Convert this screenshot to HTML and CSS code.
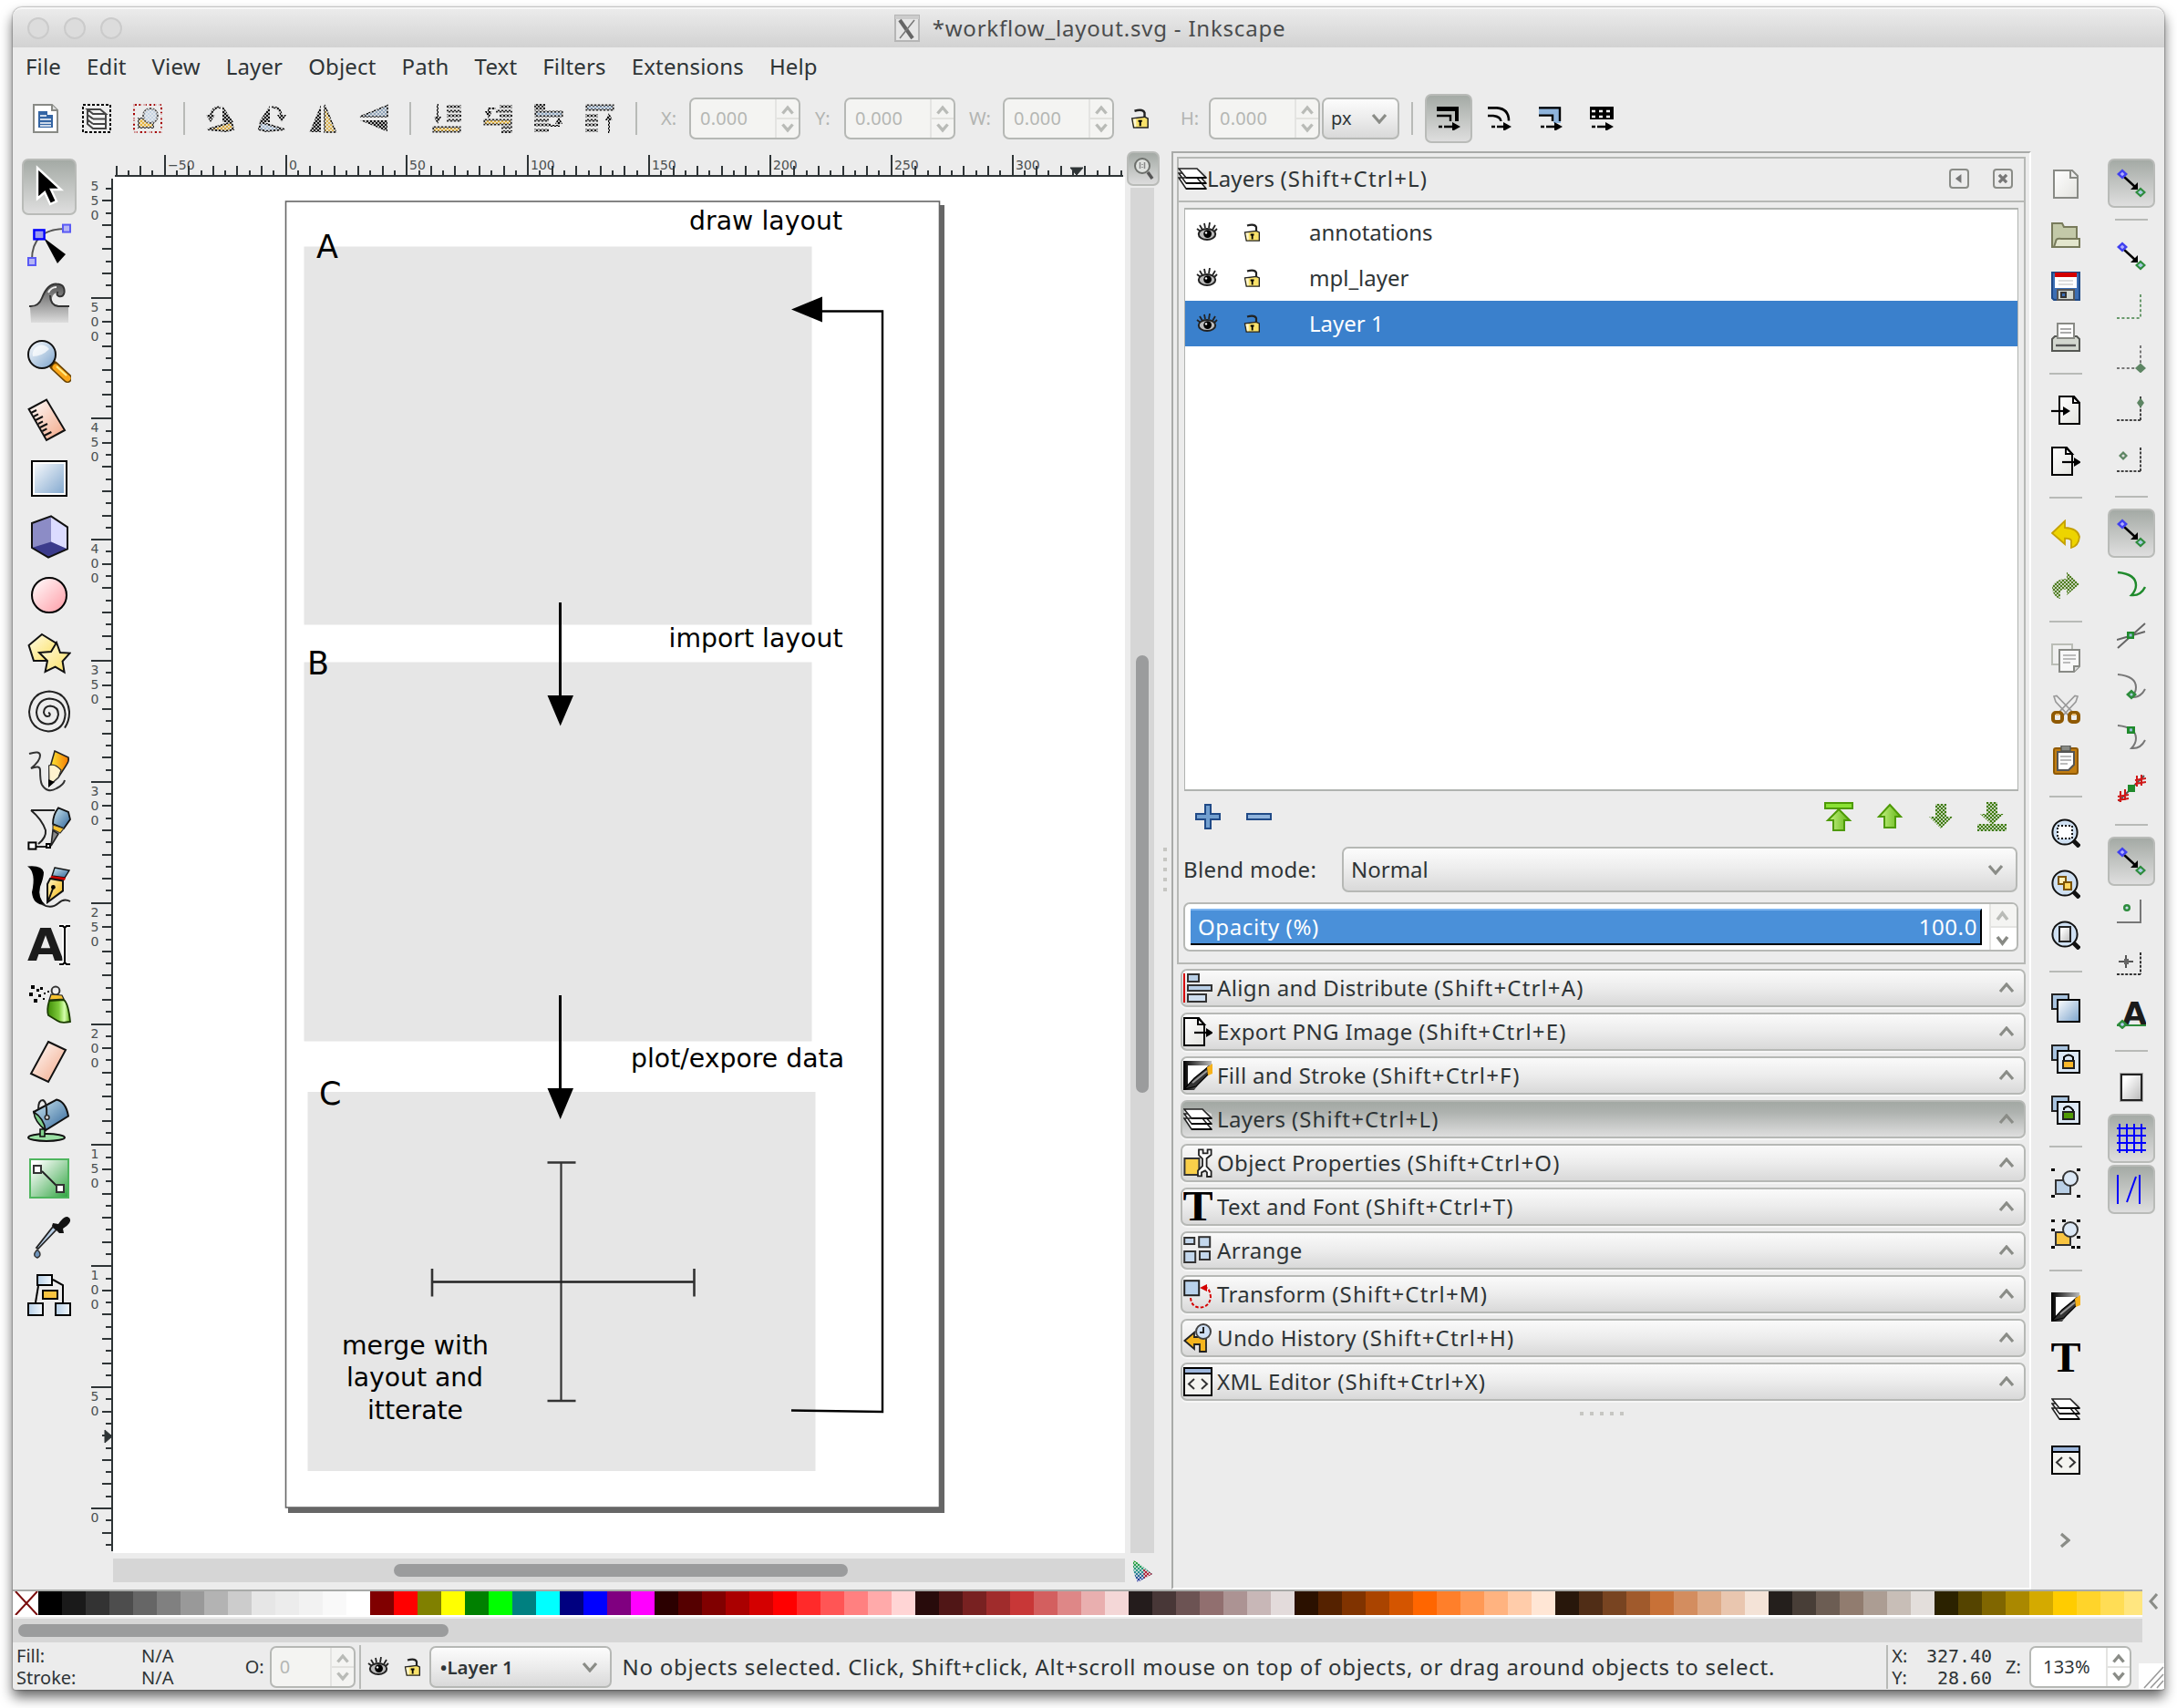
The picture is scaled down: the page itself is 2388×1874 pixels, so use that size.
FILE: index.html
```html
<!DOCTYPE html>
<html lang="en">
<head>
<meta charset="utf-8">
<title>*workflow_layout.svg - Inkscape</title>
<link rel="stylesheet" href="styles.css">
</head>
<body>
<svg class="sprite" aria-hidden="true">
  <defs>
    <linearGradient id="gBlue" x1="0" y1="0" x2="1" y2="1"><stop offset="0" stop-color="#fff"/><stop offset="1" stop-color="#7ba3cc"/></linearGradient>
    <linearGradient id="gBlueH" x1="0" y1="0" x2="1" y2="0"><stop offset="0" stop-color="#b4cfe8"/><stop offset="1" stop-color="#f4f8fc"/></linearGradient>
    <linearGradient id="gPen" x1="0" y1="0" x2="1" y2="1"><stop offset="0" stop-color="#cfe9f2"/><stop offset="1" stop-color="#2f6499"/></linearGradient>
    <linearGradient id="gPink" x1="0" y1="0" x2="1" y2="1"><stop offset="0" stop-color="#fff"/><stop offset="1" stop-color="#ff9ba5"/></linearGradient>
    <linearGradient id="gPeach" x1="0" y1="0" x2="1" y2="1"><stop offset="0" stop-color="#fff"/><stop offset="1" stop-color="#f2a584"/></linearGradient>
    <linearGradient id="gYellow" x1="0" y1="0" x2="1" y2="1"><stop offset="0" stop-color="#fffce8"/><stop offset="1" stop-color="#fbdf5e"/></linearGradient>
    <linearGradient id="gOrange" x1="0" y1="0" x2="1" y2="0"><stop offset="0" stop-color="#fcf03a"/><stop offset="1" stop-color="#f57900"/></linearGradient>
    <linearGradient id="gGold" x1="0" y1="0" x2="1" y2="1"><stop offset="0" stop-color="#fff6c8"/><stop offset="1" stop-color="#f5b400"/></linearGradient>
    <linearGradient id="gGreen" x1="0" y1="0" x2="1" y2="1"><stop offset=".1" stop-color="#fff"/><stop offset="1" stop-color="#2fa340"/></linearGradient>
    <linearGradient id="gSpray" x1="0" y1="0" x2="1" y2="0"><stop offset="0" stop-color="#3f8c06"/><stop offset=".5" stop-color="#7ecb3b"/><stop offset=".75" stop-color="#d7ffb0"/><stop offset="1" stop-color="#5fb019"/></linearGradient>
    <linearGradient id="gWave" x1="0" y1="0" x2="0" y2="1"><stop offset="0" stop-color="#555"/><stop offset="1" stop-color="#ddd"/></linearGradient>
    <linearGradient id="gPage" x1="0" y1="0" x2="1" y2="1"><stop offset="0" stop-color="#fff"/><stop offset="1" stop-color="#e3e3df"/></linearGradient>
    <linearGradient id="gGray" x1="0" y1="0" x2="1" y2="1"><stop offset=".2" stop-color="#fff"/><stop offset="1" stop-color="#b8b8b8"/></linearGradient>
    <linearGradient id="gArrow" x1="0" y1="0" x2="1" y2="0"><stop offset="0" stop-color="#c9f58a"/><stop offset="1" stop-color="#63b515"/></linearGradient>
    <linearGradient id="gDark" x1="0" y1="0" x2="1" y2="0"><stop offset="0" stop-color="#000"/><stop offset="1" stop-color="#bbb"/></linearGradient>
  </defs>

  <!-- toolbar -->
  <symbol id="doc" viewBox="0 0 16 16"><path d="M1.500.500h10l3 3v12h-13z" fill="#fff" stroke="#888a85"/><path d="M11.500.500v3h3" fill="#ddd" stroke="#888a85"/><path d="M4 4h5v2h3v7H4z" fill="#3465a4"/><path d="M5 6.500h3.500M5 8.500h6M5 10.500h6M5 12h6" stroke="#fff" stroke-width=".8"/></symbol>
  <symbol id="selall" viewBox="0 0 16 16"><rect x=".5" y=".5" width="15" height="15" fill="none" stroke="#000" stroke-dasharray="1.500 1"/><path d="M3 3h7l3 2.500H6zM3 3v8l3 2.500h7V5.500M6 8.200h7M6 11h7M3 6l3 2.200M3 8.600 6 11" fill="#f4f4f4" stroke="#444" stroke-width="1"/></symbol>
  <symbol id="selobj" viewBox="0 0 16 16"><rect x=".5" y=".5" width="15" height="15" fill="none" stroke="#a40000" stroke-dasharray="1.500 1.200"/><rect x="3" y="8" width="8" height="5" fill="#e8b53a" stroke="#333"/><circle cx="9.500" cy="6.500" r="4" fill="#c5d3e2" stroke="#555"/></symbol>
  <symbol id="rotl" viewBox="0 0 16 16"><path d="M9 1v9h6z" fill="#111"/><path d="M1 14 14 10l1 4-4 1z" fill="#d6a63c" stroke="#111"/><path d="M8 2Q3 1 2.500 8" fill="none" stroke="#111" stroke-width="1.300"/><path d="M0 6h5l-2.500 4z" fill="#111"/></symbol>
  <symbol id="rotr" viewBox="0 0 16 16"><path d="M7 1v9H1z" fill="#111"/><path d="M15 14 2 10l-1 4 4 1z" fill="#a8bdd4" stroke="#111"/><path d="M8 2q5-1 5.500 6" fill="none" stroke="#111" stroke-width="1.300"/><path d="M16 6h-5l2.500 4z" fill="#111"/></symbol>
  <symbol id="fliph" viewBox="0 0 16 16"><path d="M7 .5v15H.8z" fill="#111"/><path d="M9 .5v15h6.200z" fill="#d9b354" stroke="#111" stroke-width=".8"/></symbol>
  <symbol id="flipv" viewBox="0 0 16 16"><path d="M.5 7h15V.8z" fill="#8fa3b8" stroke="#111" stroke-width=".8"/><path d="M.5 9h15v6.200z" fill="#111"/></symbol>
  <symbol id="tobot" viewBox="0 0 16 16"><path d="M8 1.500h8M8 4h8M8 6.500h8M8 9h8" stroke="#222" stroke-width="1.600"/><path d="M.7 12.700h14.600v2.600H.7z" fill="#e8b53a" stroke="#222"/><path d="M3 0v8" stroke="#000"/><path d="M1 7h4L3 11z"/></symbol>
  <symbol id="lower" viewBox="0 0 16 16"><path d="M9 1.500h7M7 4h9M9 6.500h7M10 13h6M10 15.300h6" stroke="#222" stroke-width="1.600"/><path d="M.7 8.700h14.600v2.600H.7z" fill="#e8b53a" stroke="#222"/><path d="M7 2.500H3V5" stroke="#000" fill="none"/><path d="M1 4h4L3 8z"/></symbol>
  <symbol id="raise" viewBox="0 0 16 16"><path d="M0 .8h6M0 2.500h6M0 9h8M0 11.500h9M0 14.500h8" stroke="#222" stroke-width="1.600"/><path d="M.7 4.200h14.600v2.600H.7z" fill="#8fa9c4" stroke="#222"/><path d="M9 12h4.500v-2" stroke="#000" fill="none"/><path d="M11.500 11h4l-2-4z"/></symbol>
  <symbol id="totop" viewBox="0 0 16 16"><path d="M0 6.500h7M0 9h7M0 11.500h7M0 14.500h7" stroke="#222" stroke-width="1.600"/><path d="M.7.700h14.600v2.600H.7z" fill="#8fa9c4" stroke="#222"/><path d="M13 16V8" stroke="#000"/><path d="M11 9h4l-2-4z"/></symbol>
  <symbol id="lock" viewBox="0 0 12 12"><path d="M3 1.500q5-1.500 6 1V6" fill="none" stroke="#222" stroke-width="1.300"/><path d="M1.500 6 9 5l2 1v5.500H2.500z" fill="#f9e26a" stroke="#222" stroke-width=".8"/><path d="M2 6.300l1 4.700h1V6.200z" fill="#fff" opacity=".7"/><path d="M5.200 7.500h2.300M6.400 7v3.500" stroke="#000" stroke-width="1.100"/></symbol>
  <symbol id="eye" viewBox="0 0 12 10"><path d="M2 1.500 3.500 4M4.500.5 5 3M7.500 0 7 3M10.500 1.500 9 4M.5 3.500 2.500 5M11.500 3.500 10 5" stroke="#222" stroke-width=".9"/><ellipse cx="6" cy="6.500" rx="4.600" ry="3" fill="#bbb" stroke="#222"/><circle cx="6.300" cy="6.300" r="2.200"/><circle cx="5.500" cy="5.700" r=".6" fill="#fff"/></symbol>
  <symbol id="afs" viewBox="0 0 13 13"><path d="M0 0h12v8h-2V2.500H0z"/><path d="M0 5h7.500v3" fill="none" stroke="#000" stroke-width="1.200"/><path d="M1 11h2M4 11h5" stroke="#000" stroke-width="1.300"/><path d="M8.500 8.500 13 11l-4.500 2.500z"/></symbol>
  <symbol id="afc" viewBox="0 0 13 13"><path d="M0 .7h5q6.500.500 6.500 7M0 5h3q4 .5 4.200 3" fill="none" stroke="#000" stroke-width="1.300"/><path d="M2 11h2M5 11h4" stroke="#000" stroke-width="1.300"/><path d="M8.500 8.500 13 11l-4.500 2.500z"/></symbol>
  <symbol id="afg" viewBox="0 0 13 13"><path d="M0 0h12v9H8V5H0z" fill="#8fb4dc"/><path d="M0 .7h11.500V8M0 4.800h7.500V8" fill="none" stroke="#000" stroke-width="1.200"/><path d="M1 11h2M4 11h5" stroke="#000" stroke-width="1.300"/><path d="M8.500 8.500 13 11l-4.500 2.500z"/></symbol>
  <symbol id="afp" viewBox="0 0 13 13"><path d="M0 0h13v7H0z"/><path d="M1 2.500h2M5 2.500h2M9 2.500h2M1 5.500h2M5 5.500h2M9 5.500h2" stroke="#fff" stroke-width="1.300"/><path d="M1 11h2M4 11h5" stroke="#000" stroke-width="1.300"/><path d="M8.500 8.500 13 11l-4.500 2.500z"/></symbol>

  <!-- toolbox, 24 unit grid -->
  <symbol id="t-select" viewBox="0 0 24 24"><path d="M5.500 1.500v17l4-3.500 3 6.500 3.500-1.600-3-6.400h5.500z" fill="#000" stroke="#fff" stroke-width="1.200"/></symbol>
  <symbol id="t-node" viewBox="0 0 24 24"><path d="M2.500 21Q2 3 21 3" fill="none" stroke="#555"/><path d="M9 8l12 9-4.500 5z" fill="#000"/><rect x="3.700" y="3.700" width="5.600" height="5" fill="#9a9af0" stroke="#00f" stroke-width="1.200"/><rect x=".5" y="19" width="4" height="4" fill="#b5b5f5" stroke="#5a5af5"/><rect x="19.500" y=".8" width="4" height="4" fill="#b5b5f5" stroke="#5a5af5"/></symbol>
  <symbol id="t-tweak" viewBox="0 0 24 24"><path d="M1.500 14Q6 14 8 9 11 1.500 16 1.500q4.500 0 4.500 4 0 3-3 2.700-1.500-.4-1.200-2.200Q13 7 13.500 10.500 14 13.500 22.500 13.500V22.500H2z" fill="url(#gWave)"/><path d="M1 13.500Q6 14 8 9 11 1 16 1.200q4.500 0 4.300 4.500-.3 2.800-3 2.300-1.800-.8-.5-2.500M12.500 7.500q0 5.500 4.500 6h6" fill="none" stroke="#333"/><path d="M11.500 6Q13 3 16 3" stroke="#eee" fill="none"/></symbol>
  <symbol id="t-zoom" viewBox="0 0 24 24"><path d="M14.500 14 22 21" stroke="#6a4300" stroke-width="5" stroke-linecap="round"/><path d="M15.500 15 22 21" stroke="#f9a61a" stroke-width="3.500" stroke-linecap="round"/><path d="M16 14.500 21.500 19.500" stroke="#ffef8a" stroke-width="1"/><circle cx="8" cy="8" r="7.500" fill="url(#gBlue)" stroke="#111"/><path d="M3 9a5 5 0 0 1 9-4Q8 9 3 9z" fill="#fff" opacity=".7"/></symbol>
  <symbol id="t-measure" viewBox="0 0 24 24"><path d="M.8 6 10.500.800 20.500 17.500 10.500 23z" fill="url(#gPeach)" stroke="#111"/><path d="M2 8l3-1.500M3.500 10l2.500-1.300M4.500 12l4-2M6 14l2.500-1.300M7 16l4-2M8.200 18l2.500-1.300M9.200 20.500l4-2" stroke="#111"/></symbol>
  <symbol id="t-rect" viewBox="0 0 24 24"><rect x="2.500" y="2.500" width="19" height="19" fill="url(#gBlue)" stroke="#000"/><rect x="3.500" y="3.500" width="17" height="17" fill="none" stroke="#fff"/></symbol>
  <symbol id="t-box" viewBox="0 0 24 24"><path d="M2.500 4.500 13 .7l9 6v12L11.500 23.300 2.500 18z" fill="#8c8cc6"/><path d="M13 .7v14l9 4v-12z" fill="#dcdcff"/><path d="M13 14.700 2.500 18l9 5.300L22 18.700z" fill="#3b3b8c"/><path d="M2.500 4.500 13 .7l9 6v12L11.500 23.300 2.500 18z" fill="none" stroke="#111"/></symbol>
  <symbol id="t-ellipse" viewBox="0 0 24 24"><circle cx="12" cy="12" r="9.500" fill="url(#gPink)" stroke="#000"/></symbol>
  <symbol id="t-star" viewBox="0 0 24 24"><path d="M8 1.500 16 6.500 13.500 16H3.500L.8 7.500z" fill="url(#gYellow)" stroke="#111"/><path d="M16 6l2 5.500 5.300.300-4 4.500 1 6-5-3-5.500 2.700 1.200-6L6.500 11.500l6.500-.5z" fill="url(#gYellow)" stroke="#111"/></symbol>
  <symbol id="t-spiral" viewBox="0 0 24 24"><path d="M11.500 12.500q1.500.5.500 1.800-2.500.8-3-2 .2-3.300 3.500-3.500 4.500.4 4.500 4.700-.7 5-5.500 5.300-6-.3-6.500-6.500.7-7 7-7.500 8.300.5 8.800 8.500-.5 8.700-9.300 9.500Q1.500 21.500 1 12 2 1.500 12 .8q10 .7 11 11 .2 5-2.500 9" fill="none" stroke="#222"/></symbol>
  <symbol id="t-pencil" viewBox="0 0 24 24"><path d="M1 3q6-2 6 1t-5 7q5-2 5 1 0 6 1 8 3 5 8 2 4-2 4.500-4.500" fill="none" stroke="#333"/><path d="M15 1.500 22.500 5q.5 2-1 4L17 16l-5 4.500V12z" fill="url(#gOrange)" stroke="#222" stroke-width=".8"/><path d="M11.800 9.500Q15 8 18.500 12L17 16l-5 4.500z" fill="#fff3cf" stroke="#333" stroke-width=".6"/><path d="M11.500 17v4.500l3.500-3z"/></symbol>
  <symbol id="t-pen" viewBox="0 0 24 24"><path d="M2 2h13M2 2q6 5 8 11 .500 4-4 7.500M5 22h6" fill="none" stroke="#222"/><rect x=".7" y="19.700" width="4" height="3.600" fill="#fff" stroke="#000"/><rect x="10.500" y="20.500" width="2" height="2" fill="#fff" stroke="#000"/><path d="M17 .7 22.500 3l1 4-3.500 5-6-2.500q0-5 3-8.800z" fill="url(#gPen)" stroke="#111" stroke-width=".9"/><path d="M14 10l6 2-2 2.500-4-2z" fill="#f7c331" stroke="#333" stroke-width=".6"/><path d="M14 13l3 2-4 6.500z" fill="#888" stroke="#222" stroke-width=".8"/></symbol>
  <symbol id="t-callig" viewBox="0 0 24 24"><path d="M0 .8Q8 0 9 4q0 3-2 8-1.500 6 3 10Q3 22 2.500 15 5 4 0 .8z"/><path d="M8 21.500q5 3 9-.5 3-3 6.500-1" fill="none" stroke="#222"/><path d="M15 1.500l8 1.500-2.500 4-7-1z" fill="url(#gPen)" stroke="#111" stroke-width=".7"/><path d="M13 6l8 1-.5 1.500-8-1z" fill="#c00"/><path d="M12.500 7.500l7 1.200v5.500L11 20.500V10.500z" fill="url(#gGold)" stroke="#111"/><path d="M11.500 19.500 14 13" stroke="#111"/><circle cx="14.200" cy="12.200" r="1.200"/></symbol>
  <symbol id="t-spray" viewBox="0 0 24 24"><path d="M2 2h2v2H2zM5 4h1.500v1.500H5zM1 6h2v2H1zM3.500 9.500h2v2h-2zM7 3h1.500v1.500H7zM6 7h1.500v1.500H6zM9 6h1v1H9zM8.500 9h1v1h-1zM11 5h1v1h-1z"/><circle cx="15.500" cy="5" r="2.200" fill="#eee" stroke="#333"/><path d="M13 7l6 .5 1 2-8 .5z" fill="#f7c331" stroke="#222" stroke-width=".6"/><path d="M12 10.500l8-.5q2.500 2 3.500 12-5 1-7-.5l-5-3q-1-3 .5-8z" fill="url(#gSpray)" stroke="#1a3b00" stroke-width=".9"/></symbol>
  <symbol id="t-eraser" viewBox="0 0 24 24"><path d="M11.500 1 21 5.500 11.500 23 2 18.500z" fill="url(#gPeach)" stroke="#111"/></symbol>
  <symbol id="t-bucket" viewBox="0 0 24 24"><ellipse cx="10.500" cy="21.500" rx="10" ry="2" fill="#9be0a4" stroke="#111"/><path d="M3.500 7.500 16 .8q5 1 6.500 9L10 17.500q-4-3-6.500-10z" fill="url(#gPen)" stroke="#111"/><path d="M3.500 7.500Q4 13 10 17.500 9 11 3.500 7.500zM7 17h2.500v4H7z" fill="#7fd08b" stroke="#111" stroke-width=".8"/><path d="M6 6Q6 1 8.500 1q2.500 1 2 9" fill="none" stroke="#222"/><circle cx="10.800" cy="10.500" r="1.200" fill="#ccc" stroke="#222" stroke-width=".7"/></symbol>
  <symbol id="t-grad" viewBox="0 0 24 24"><rect x="1.500" y="1.500" width="21" height="21" fill="url(#gGreen)" stroke="#4fb55e"/><path d="M8 8l8 8" stroke="#222"/><rect x="3.500" y="5" width="4" height="4" fill="#fff" stroke="#333"/><rect x="16" y="15.500" width="4" height="4" fill="#fff" stroke="#333"/></symbol>
  <symbol id="t-drop" viewBox="0 0 24 24"><path d="M16 8 6 18.500l-1-.5L14 6.500z" fill="#b9cfe6" stroke="#222" stroke-width=".9"/><path d="M14 4.500 17 5q3-4.500 5-4 2.500 1 1 3.500Q22 6 19.500 7.500l.5 2.500h-2.500L13.500 6z" fill="#111"/><path d="M5.500 19q3 3 0 4.500-3-1-.5-4z" fill="#6f94bb" stroke="#333" stroke-width=".7"/></symbol>
  <symbol id="t-conn" viewBox="0 0 24 24"><path d="M6 7 4.500 16M14 3.500l5.500 3V16" fill="none" stroke="#000"/><rect x="5.500" y="1" width="8" height="5.500" fill="url(#gBlueH)" stroke="#000"/><rect x="8.500" y="9.500" width="8" height="4.500" fill="#f9c440" stroke="#000"/><rect x=".5" y="16.500" width="8" height="6.500" fill="url(#gBlueH)" stroke="#000"/><rect x="15.500" y="16.500" width="8" height="6.500" fill="url(#gBlueH)" stroke="#000"/></symbol>

  <!-- panel and command icons -->
  <symbol id="layers" viewBox="0 0 16 12"><path d="M.5.500h10L15.500 3v8.500H5.500L2.500 9 .5 6z" fill="#ddd"/><path d="M.5 5.500h10l5 6h-11zM.5 3h10l5 5.500h-11z" fill="#fff" stroke="#222" stroke-width=".8"/><path d="M.5.500h10l5 5h-11z" fill="#fff" stroke="#222" stroke-width=".8"/><path d="M4.500 5.500h11M4.500 8.500h11M4.500 11.500h11" stroke="#000"/></symbol>
  <symbol id="new" viewBox="0 0 16 16"><path d="M1.500.500h10l3 3v12h-13z" fill="url(#gPage)" stroke="#888a85"/><path d="M10.500.500v4h4" fill="#eee" stroke="#888a85"/></symbol>
  <symbol id="open" viewBox="0 0 16 16"><path d="M.5 14.500v-13H6l1 2h7v11z" fill="#c3c9a8" stroke="#787b5b"/><path d="M2.500 11.500q0-2 3-1.500h10v4.500h-14z" fill="#e3e6cd" stroke="#787b5b"/></symbol>
  <symbol id="save" viewBox="0 0 16 16"><path d="M.5.500h15v15h-14l-1-1z" fill="#3c6eb4" stroke="#204a87"/><path d="M2 .5h12V3H2z" fill="#d40000"/><path d="M2 3h12v6H2z" fill="#fff"/><path d="M4 5h8M4 7h8" stroke="#ddd"/><path d="M3.500 10h9v5.500h-9z" fill="#d3d7cf" stroke="#555"/><path d="M5.500 11.500h2.500v2.500H5.500z" fill="#3c6eb4" stroke="#333"/></symbol>
  <symbol id="print" viewBox="0 0 16 16"><path d="M.5 9 2 7.500h12L15.500 9v6.500H.5z" fill="#d3d7cf" stroke="#555753"/><path d="M3.500.500h9v8h-9z" fill="#fff" stroke="#888a85"/><path d="M5 3.500h6M5 5.500h6" stroke="#aaa"/><path d="M2.500 12.500h11" stroke="#555" stroke-width="1.200"/></symbol>
  <symbol id="import" viewBox="0 0 16 16"><path d="M4.500.500h8l3 3.500v11.500h-11z" fill="url(#gPage)" stroke="#000"/><path d="M12 .500V4h3.500z" fill="#fff" stroke="#000"/><path d="M0 8.500h7.500" stroke="#000" stroke-width="1.100"/><path d="M6.500 6l4 2.500-4 2.500z"/></symbol>
  <symbol id="export" viewBox="0 0 16 16"><path d="M.5.500h8l3 3.500v11.500H.5z" fill="url(#gPage)" stroke="#000"/><path d="M8 .500V4h3.500z" fill="#fff" stroke="#000"/><path d="M6 8.500h7.500" stroke="#000" stroke-width="1.100"/><path d="M12.500 6l4 2.500-4 2.500z"/></symbol>
  <symbol id="undo" viewBox="0 0 16 16"><path d="M.5 7.500 7.500.800v3.700q7 .3 8 5-.5 5-4.500 6v-3.200q.5-2-3.500-2v3.200z" fill="#edd400" stroke="#c4a000" stroke-width=".9"/></symbol>
  <symbol id="redo" viewBox="0 0 16 16"><path d="M15.500 7.500 8.500.800v3.700q-7 .3-8 5 .5 5 4.500 6v-3.200q-.5-2 3.500-2v3.200z" fill="#4e7d1e"/></symbol>
  <symbol id="copy" viewBox="0 0 16 16"><path d="M.5.500h11v11H.5z" fill="#f0f0f0" stroke="#babdb6"/><path d="M4.500 3.500h11v9l-3 3h-8z" fill="#f8f8f8" stroke="#888a85"/><path d="M6.500 6.500h7M6.500 8.500h7M6.500 10.500h4" stroke="#bbb"/><path d="M12.500 15.500v-3h3" fill="#ddd" stroke="#888a85"/></symbol>
  <symbol id="cut" viewBox="0 0 16 16"><path d="M1.500 1 3 .7 12 10l-3 1-6.500-7zM14.500 1 13 .7 4 10l3 1 6.500-7z" fill="#eee" stroke="#999" stroke-width=".8"/><rect x="1" y="10" width="5" height="5" rx="1.500" fill="none" stroke="#8f5902" stroke-width="2"/><rect x="10" y="10" width="5" height="5" rx="1.500" fill="none" stroke="#8f5902" stroke-width="2"/><path d="M2.500 11h2M11.500 11h2" stroke="#e9b96e"/></symbol>
  <symbol id="paste" viewBox="0 0 16 16"><rect x="1.500" y="1.500" width="13" height="14" rx="1" fill="#c17d11" stroke="#8f5902"/><path d="M3.500 3.500h9v7l-3 3h-6z" fill="#fff" stroke="#555"/><path d="M5.500 0h5v3h-5z" fill="#888a85" stroke="#555753" stroke-width=".7"/><path d="M5 6h6M5 8h6M5 10h4" stroke="#bbb"/></symbol>
  <symbol id="mag" viewBox="0 0 16 16"><circle cx="7.500" cy="7.500" r="6.800" fill="#cfe0f2" stroke="#111"/><path d="M12 12l3.500 3.500" stroke="#111" stroke-width="2.400"/></symbol>
  <symbol id="zsel" viewBox="0 0 16 16"><use href="#mag"/><rect x="3.500" y="4" width="8" height="7" fill="#fff" stroke="#000" stroke-width=".9" stroke-dasharray="1 1"/></symbol>
  <symbol id="zdraw" viewBox="0 0 16 16"><use href="#mag"/><rect x="4" y="4" width="4" height="4" fill="#fff0b8" stroke="#7a5200"/><rect x="7" y="7" width="4" height="4" fill="#ffd75e" stroke="#7a5200"/></symbol>
  <symbol id="zpage" viewBox="0 0 16 16"><use href="#mag"/><rect x="4.500" y="3.500" width="6" height="8" fill="url(#gGray)" stroke="#222"/></symbol>
  <symbol id="dup" viewBox="0 0 16 16"><rect x=".5" y=".500" width="9" height="8" fill="#a9c4e0" stroke="#222"/><rect x="3.500" y="3.500" width="12" height="12" fill="url(#gBlue)" stroke="#000"/></symbol>
  <symbol id="clone" viewBox="0 0 16 16"><rect x=".5" y=".500" width="9" height="8" fill="#a9c4e0" stroke="#222"/><rect x="3.500" y="3.500" width="12" height="12" fill="#dce8f5" stroke="#000"/><path d="M7 9V7q2.500-2.500 5 0v2" fill="none" stroke="#000"/><rect x="6.500" y="9" width="6" height="4" fill="#f9b72a" stroke="#222"/></symbol>
  <symbol id="unclone" viewBox="0 0 16 16"><rect x=".5" y=".500" width="9" height="8" fill="#a9c4e0" stroke="#222"/><rect x="3.500" y="3.500" width="12" height="12" fill="#dce8f5" stroke="#000"/><path d="M7 8V7q2.500-2.500 5 1v1" fill="none" stroke="#000"/><rect x="6.500" y="9" width="6" height="4" fill="#4e9a06" stroke="#222"/></symbol>
  <symbol id="group" viewBox="0 0 16 16"><path d="M0 0h2v1.500H0zM14 0h2v1.500h-2zM0 14.500h2V16H0zM14 14.500h2V16h-2z"/><rect x="2.500" y="6.500" width="8" height="7.500" fill="#b9cfe6" stroke="#333"/><circle cx="10.500" cy="5.500" r="4" fill="#dce8f5" stroke="#333"/></symbol>
  <symbol id="ungroup" viewBox="0 0 16 16"><path d="M0 0h2v1.500H0zM14 0h2v1.500h-2zM0 14.500h2V16H0zM14 14.500h2V16h-2zM6 0h2v1.500H6zM0 5h2v1.500H0zM14 9h2v1.500h-2zM11 14.500h2V16h-2z"/><rect x="2.500" y="7" width="8" height="7" fill="#f9c440" stroke="#333"/><circle cx="10.500" cy="5.500" r="4" fill="#dce8f5" stroke="#333"/></symbol>
  <symbol id="fill" viewBox="0 0 16 16"><path d="M0 0h15.500v3L6 16H0z" fill="url(#gDark)"/><path d="M2.500 2.500H13.500L5 13l-2.500.500z" fill="#fff"/><path d="M.5 15.500 6 9.500 14 3v4L7 14z" fill="#333" stroke="#000" stroke-width=".6"/><path d="M5 12l8-6.500" stroke="#999"/><path d="M13 3.500 16 1.500V7l-2.500 1z" fill="#f7b21a"/></symbol>
  <symbol id="xml" viewBox="0 0 16 16"><path d="M.5.500h15v15H.5z" fill="#f4f4f0" stroke="#000"/><path d="M1 1h14v2H1z" fill="#9db7dd"/><path d="M0 3.500h16" stroke="#000"/><path d="M6 6.500 3 9.200l3 2.800M10 6.500l3 2.700-3 2.800" fill="none" stroke="#333"/></symbol>
  <symbol id="align" viewBox="0 0 16 16"><path d="M.5 0v16" stroke="#d40000"/><rect x="2.500" y=".5" width="6" height="4" fill="#b9cfe6" stroke="#333"/><rect x="2.500" y="6.500" width="13" height="3" fill="#b9cfe6" stroke="#333"/><rect x="2.500" y="11.500" width="10" height="4" fill="#cfdff0" stroke="#333"/></symbol>
  <symbol id="props" viewBox="0 0 16 16"><rect x=".7" y="5.500" width="8" height="9" fill="#f9cf4a" stroke="#333"/><path d="M8.500.700v3l2 2v4l-2.500 2.500v3h2v-2l2-1 1 1v2.300h2.300v-3L12.800 10V5.500l2.500-2V.700h-2v2h-2.500v-2z" fill="#fff" stroke="#222" stroke-width=".9"/></symbol>
  <symbol id="arrange" viewBox="0 0 16 16"><g fill="#c3d7ec" stroke="#333"><rect x=".6" y="1" width="5.500" height="3.500"/><rect x="8.600" y=".6" width="6" height="5.500"/><rect x=".6" y="8.500" width="6" height="6"/><rect x="9" y="8.500" width="5.500" height="4.500"/></g></symbol>
  <symbol id="transform" viewBox="0 0 16 16"><rect x=".6" y=".6" width="8" height="8" fill="#b9d2ec" stroke="#222"/><path d="M4 10q.500 5 5 5.300 5.500-.3 6-5.800-.500-4-2-5" fill="none" stroke="#d40000" stroke-dasharray="1.800 1"/><path d="M9 4.500l4-2v4z" fill="#d40000"/></symbol>
  <symbol id="history" viewBox="0 0 16 16"><path d="M.7 9.500 6 5v2.500h6.500v8H9v-4H6V14z" fill="#f5b51d" stroke="#222" stroke-width=".9"/><circle cx="11" cy="4.500" r="4" fill="#cfe0f5" stroke="#444"/><path d="M11 2v3H9" fill="none" stroke="#222"/></symbol>
  <symbol id="plus" viewBox="0 0 14 14"><path d="M5.500.500h3v5h5v3h-5v5h-3v-5h-5v-3h5z" fill="#729fcf" stroke="#204a87"/></symbol>
  <symbol id="minus" viewBox="0 0 14 14"><path d="M.5 5.500h13v3H.5z" fill="#8fb3dc" stroke="#204a87"/></symbol>
  <symbol id="up" viewBox="0 0 16 16"><path d="M8 1.500l6 6.500h-3v6H5V8H2z" fill="url(#gArrow)" stroke="#4e9a06"/></symbol>
  <symbol id="uptop" viewBox="0 0 16 16"><path d="M.5.500h15v3H.5z" fill="#8ae234" stroke="#4e9a06"/><path d="M8 4l6 6h-3v5.500H5V10H2z" fill="url(#gArrow)" stroke="#4e9a06"/></symbol>
  <symbol id="down" viewBox="0 0 16 16"><path d="M8 14.500 1.500 8H5V1h6v7h3.500z" fill="#3d7a0a"/></symbol>
  <symbol id="downbot" viewBox="0 0 16 16"><path d="M8 12.500 1.500 6.500H5V0h6v6.500h3.500zM0 12h16v4H0z" fill="#3d7a0a"/></symbol>

  <!-- snapping -->
  <symbol id="snap" viewBox="0 0 16 16"><path d="M4 4.500 10 10" stroke="#000" stroke-width="1.200"/><path d="M7.500 11.500h4v-4z"/><path d="M0 3l3-2.700L6 3 3 5.700z" fill="#4040f0"/><path d="M1.800 3 3 1.900 4.200 3 3 4.100z" fill="#b0b0ff"/><path d="M10 13l3-2.700 3 2.700-3 2.700z" fill="#2d8c3c"/><path d="M11.500 13l1.500-1.200 1.500 1.200-1.500 1.200z" fill="#a8c8e0"/></symbol>
  <symbol id="sbbox" viewBox="0 0 16 16"><path d="M0 14h13M13 1v13" stroke="#6a9a6d" stroke-dasharray="1.500 1.200" fill="none"/></symbol>
  <symbol id="scorner" viewBox="0 0 16 16"><path d="M0 13.500h13M13 1v13" stroke="#777" stroke-dasharray="1.500 1.200" fill="none"/><path d="M10 13.500l3-2.700 3 2.700-3 2.700z" fill="#5d8563"/></symbol>
  <symbol id="sedge" viewBox="0 0 16 16"><path d="M0 14h13M13 1v13" stroke="#444" stroke-dasharray="1.500 .8" fill="none"/><path d="M11 4.500 13 1.800l2 2.700-2 2.700z" fill="#5d8563"/></symbol>
  <symbol id="scenter" viewBox="0 0 16 16"><path d="M0 14h13M13 1v13" stroke="#444" stroke-dasharray="1.500 .8" fill="none"/><path d="M1 5.500 3.500 3 6 5.500 3.500 8z" fill="#5d8563"/><circle cx="3.500" cy="5.500" r=".8" fill="#ddd"/></symbol>
  <symbol id="spath" viewBox="0 0 16 16"><path d="M.5 1.500q10 1 10 7 0 3-2.500 5.500 5 .5 7.500-4.500" fill="none" stroke="#1f8a2c" stroke-width="1.200"/></symbol>
  <symbol id="sint" viewBox="0 0 16 16"><path d="M.5 15 15.500 1.500M0 10.500 15.500 6" stroke="#666"/><rect x="5.500" y="6" width="4" height="4" fill="#1f8a2c"/><rect x="6.800" y="7.200" width="1.500" height="1.500" fill="#9bd"/></symbol>
  <symbol id="scusp" viewBox="0 0 16 16"><path d="M.5 1.500q10 1 10 7 0 3-2.500 5.500 5 .5 7.500-4.500" fill="none" stroke="#777"/><path d="M5 12.500l3-2.700 3 2.700-3 2.700z" fill="#2d8c3c"/><circle cx="8" cy="12.500" r=".8" fill="#acd"/></symbol>
  <symbol id="ssmooth" viewBox="0 0 16 16"><path d="M.5 1.500q10 1 10 7 0 3-2.500 5.500 5 .5 7.500-4.500" fill="none" stroke="#777"/><rect x="5.500" y="2" width="4.500" height="4" fill="#1f8a2c"/><rect x="7" y="3.200" width="1.500" height="1.500" fill="#9bd"/></symbol>
  <symbol id="smid" viewBox="0 0 16 16"><path d="M1 15 15 1" stroke="#555"/><path d="M2 9.500v6M4.500 8.500v6M.5 12.500l6-1M.5 14.500l6-1M11 1v6M13.500.500v6M10 3.500l6-1M10 5.500l6-1" stroke="#d01818"/><rect x="6" y="6" width="4" height="4" fill="#1f8a2c"/></symbol>
  <symbol id="sobj" viewBox="0 0 16 16"><path d="M0 13.500h13V1" stroke="#777" fill="none"/><circle cx="5.500" cy="5.500" r="2" fill="#2d8c3c"/><circle cx="5.500" cy="5.500" r=".8" fill="#cde"/></symbol>
  <symbol id="srot" viewBox="0 0 16 16"><path d="M0 14h13M13 2v12" stroke="#333" stroke-dasharray="1.500 .8" fill="none"/><path d="M1 7h8M5 3.500v7" stroke="#555"/><rect x="4" y="5.500" width="2.500" height="3" fill="#666"/></symbol>
  <symbol id="spage" viewBox="0 0 16 16"><rect x="2" y=".5" width="12" height="15" fill="none" stroke="#aaa"/><rect x="2.500" y="1" width="11" height="14" fill="url(#gGray)" stroke="#222"/></symbol>
  <symbol id="sgrid" viewBox="0 0 16 16"><path d="M0 2.500h16M0 6.500h16M0 10.500h16M0 14.500h16M1.500 0v16M5.500 0v16M9.500 0v16M13.500 0v16" stroke="#00f"/></symbol>
  <symbol id="sguide" viewBox="0 0 16 16"><path d="M.5 0v16M12.500 0v16M10.500 1 5.500 15" stroke="#00f"/></symbol>

  <symbol id="chev" viewBox="0 0 18 12"><path d="M2 2l7 8 7-8" fill="none" stroke="currentColor" stroke-width="3.200"/></symbol>
  <symbol id="spin" viewBox="0 0 26 42"><path d="M0 21h26" stroke="#e0e0de" stroke-width="2"/><path d="M7 15l6-7 6 7" fill="none" stroke="currentColor" stroke-width="3.600"/><path d="M7 28l6 7 6-7" fill="none" stroke="currentColor" stroke-width="3.600"/></symbol>
</svg>

<div class="window">
  <header class="titlebar">
    <div class="lights"><i></i><i></i><i></i></div>
    <div class="title">
      <svg class="xdoc" viewBox="0 0 28 30"><rect x="1" y="1" width="26" height="28" fill="#e6e6e6" stroke="#b5b5b5" stroke-width="2"/><path d="M1 3h26" stroke="#ccc" stroke-width="4"/><path d="M6 6l14 20" stroke="#666" stroke-width="4"/><path d="M22 6 6 26" stroke="#777" stroke-width="1.500"/></svg>
      <span>*workflow_layout.svg - Inkscape</span>
    </div>
  </header>

  <nav class="menubar">
    <span>File</span><span>Edit</span><span>View</span><span>Layer</span><span>Object</span><span>Path</span><span>Text</span><span>Filters</span><span>Extensions</span><span>Help</span>
  </nav>

  <div class="toolbar">
    <div class="cell"><svg><use href="#doc"/></svg></div>
    <div class="cell"><svg><use href="#selall"/></svg></div>
    <div class="cell stipple"><svg><use href="#selobj"/></svg></div>
    <i class="vsep"></i>
    <div class="cell stipple"><svg><use href="#rotl"/></svg></div>
    <div class="cell stipple"><svg><use href="#rotr"/></svg></div>
    <div class="cell stipple"><svg><use href="#fliph"/></svg></div>
    <div class="cell stipple"><svg><use href="#flipv"/></svg></div>
    <i class="vsep"></i>
    <div class="cell stipple"><svg><use href="#tobot"/></svg></div>
    <div class="cell stipple"><svg><use href="#lower"/></svg></div>
    <div class="cell stipple"><svg><use href="#raise"/></svg></div>
    <div class="cell stipple"><svg><use href="#totop"/></svg></div>
    <i class="vsep"></i>
    <label class="lbl x">X:</label><div class="entry off"><span>0.000</span><svg><use href="#spin"/></svg></div>
    <label class="lbl y">Y:</label><div class="entry off"><span>0.000</span><svg><use href="#spin"/></svg></div>
    <label class="lbl w">W:</label><div class="entry off"><span>0.000</span><svg><use href="#spin"/></svg></div>
    <svg class="tb-lock"><use href="#lock"/></svg>
    <label class="lbl h">H:</label><div class="entry off"><span>0.000</span><svg><use href="#spin"/></svg></div>
    <div class="combo units"><span>px</span><svg><use href="#chev"/></svg></div>
    <i class="vsep last"></i>
    <div class="cell"><div class="btn on"><svg class="aff"><use href="#afs"/></svg></div></div>
    <div class="cell"><svg class="aff"><use href="#afc"/></svg></div>
    <div class="cell"><svg class="aff"><use href="#afg"/></svg></div>
    <div class="cell"><svg class="aff"><use href="#afp"/></svg></div>
  </div>

  <main class="main">
    <aside class="toolbox">
      <div class="tool on"><svg><use href="#t-select"/></svg></div>
      <div class="tool"><svg><use href="#t-node"/></svg></div>
      <div class="tool"><svg><use href="#t-tweak"/></svg></div>
      <div class="tool"><svg><use href="#t-zoom"/></svg></div>
      <div class="tool"><svg><use href="#t-measure"/></svg></div>
      <div class="tool"><svg><use href="#t-rect"/></svg></div>
      <div class="tool"><svg><use href="#t-box"/></svg></div>
      <div class="tool"><svg><use href="#t-ellipse"/></svg></div>
      <div class="tool"><svg><use href="#t-star"/></svg></div>
      <div class="tool"><svg><use href="#t-spiral"/></svg></div>
      <div class="tool"><svg><use href="#t-pencil"/></svg></div>
      <div class="tool"><svg><use href="#t-pen"/></svg></div>
      <div class="tool"><svg><use href="#t-callig"/></svg></div>
      <div class="tool"><svg viewBox="0 0 24 24"><text class="glyph-a" x="0" y="20.500" font-size="25" textLength="20" lengthAdjust="spacingAndGlyphs">A</text><path d="M17.500 1.500h2l1 1 1-1h2M20.500 2v20M17.500 22.500h2l1-1 1 1h2" stroke="#fff" stroke-width="2.600" fill="none"/><path d="M17.500 1.500h2l1 1 1-1h2M20.500 2v20M17.500 22.500h2l1-1 1 1h2" stroke="#000" fill="none"/></svg></div>
      <div class="tool"><svg><use href="#t-spray"/></svg></div>
      <div class="tool"><svg><use href="#t-eraser"/></svg></div>
      <div class="tool"><svg><use href="#t-bucket"/></svg></div>
      <div class="tool"><svg><use href="#t-grad"/></svg></div>
      <div class="tool"><svg><use href="#t-drop"/></svg></div>
      <div class="tool"><svg><use href="#t-conn"/></svg></div>
    </aside>

    <section class="editor">
      <svg class="hruler" id="hruler" viewBox="98 166 1138 28"></svg>
      <div class="zoomfit"><svg viewBox="0 0 24 28"><circle cx="11" cy="11" r="8" fill="#dfe2df" stroke="#6d706c" stroke-width="2"/><path d="M17 18l5 7" stroke="#555" stroke-width="3.500"/><path d="M8.500 7v7M13.500 7v7M11 9v1M11 12v1" stroke="#888" stroke-width="1.500"/></svg></div>
      <svg class="vruler" id="vruler" viewBox="98 194 26 1510"></svg>
      <svg class="canvas" viewBox="124 194 1110 1510">
        <path d="M1031 225h5v1435H316v-6h715z" fill="#666"/>
        <rect x="313.500" y="221" width="717" height="1433" fill="#fff" stroke="#666" stroke-width="1.600"/>
        <g fill="#e6e6e6"><rect x="333.500" y="270.500" width="557" height="415"/><rect x="333.500" y="726.500" width="557" height="416"/><rect x="337.500" y="1198" width="557" height="416"/></g>
        <g fill="none" stroke="#000" stroke-width="2.600">
          <path d="M868 1547.500 968 1549V341.500H900" stroke-width="2.400"/>
          <path d="M614.500 661V765M614.500 1092V1197" stroke-width="3"/>
          <path d="M615.500 1276V1537" stroke="#333" stroke-width="2.200"/><path d="M474 1406.500H761" stroke="#222"/>
          <path d="M600.500 1275.500h31M600.500 1537h31M474 1392v30.500M761.500 1392v30.500" stroke="#333" stroke-width="2.600"/>
        </g>
        <path d="M868 339.500l34-14v28zM600.500 763h28.500L614.700 796.500zM600.500 1194h28.500l-14.300 34z"/>
        <g class="labels">
          <text x="756" y="251.500" textLength="168">draw layout</text>
          <text x="733.500" y="709.500" textLength="191">import layout</text>
          <text x="692" y="1171" textLength="234">plot/expore data</text>
          <text x="375" y="1485.500" textLength="161">merge with</text>
          <text x="380" y="1521" textLength="150">layout and</text>
          <text x="403" y="1556.500" textLength="105">itterate</text>
          <text class="big" x="347" y="283">A</text><text class="big" x="337" y="740">B</text><text class="big" x="350" y="1211.500">C</text>
        </g>
      </svg>
      <div class="vscroll"><i></i></div>
      <div class="hscroll"><i></i></div>
      <div class="cms stipple"><svg viewBox="0 0 22 24"><defs><linearGradient id="cie" x1="0" y1="0" x2="0" y2="1"><stop offset="0" stop-color="#1fa41f"/><stop offset=".5" stop-color="#2b9890"/><stop offset="1" stop-color="#2020a0"/></linearGradient></defs><path d="M1 0q4 1 21 15L6 24Q0 14 1 0z" fill="url(#cie)"/><path d="M12 9l10 6-9 5z" fill="#b02035"/></svg></div>
    </section>

    <div class="splitter"><i></i><i></i><i></i><i></i><i></i></div>

    <section class="dock">
      <div class="dock-title">
        <svg class="lay"><use href="#layers"/></svg><span>Layers <em>(Shift+Ctrl+L)</em></span>
        <b class="mini"><svg viewBox="0 0 22 22"><path d="M14 5v12l-8-6z" fill="#777"/></svg></b>
        <b class="mini"><svg viewBox="0 0 22 22"><path d="M6 6l10 10M16 6 6 16" stroke="#777" stroke-width="4"/></svg></b>
      </div>
      <div class="dock-body">
        <div class="layer-list">
          <div class="layer"><svg class="eye"><use href="#eye"/></svg><svg class="lk"><use href="#lock"/></svg><span>annotations</span></div>
          <div class="layer"><svg class="eye"><use href="#eye"/></svg><svg class="lk"><use href="#lock"/></svg><span>mpl_layer</span></div>
          <div class="layer sel"><svg class="eye"><use href="#eye"/></svg><svg class="lk"><use href="#lock"/></svg><span>Layer 1</span></div>
        </div>
        <div class="layer-actions">
          <div class="cell"><svg class="s28"><use href="#plus"/></svg></div>
          <div class="cell"><svg class="s28"><use href="#minus"/></svg></div>
          <div class="grow"></div>
          <div class="cell"><svg><use href="#uptop"/></svg></div>
          <div class="cell"><svg><use href="#up"/></svg></div>
          <div class="cell stipple"><svg><use href="#down"/></svg></div>
          <div class="cell stipple"><svg><use href="#downbot"/></svg></div>
        </div>
        <div class="blend"><label>Blend mode:</label><div class="combo"><span>Normal</span><svg><use href="#chev"/></svg></div></div>
        <div class="opacity"><div class="bar"><span>Opacity (%)</span><span>100.0</span></div><svg class="ospin" viewBox="0 0 30 50"><path d="M0 0h30v25H0z" fill="#f4f4f2"/><path d="M1 0v50M0 25h30" stroke="#e4e4e2" stroke-width="2"/><path d="M9 17l5.500-7 5.500 7" fill="none" stroke="#b9bbb7" stroke-width="3.600"/><path d="M9 36l5.500 7 5.500-7" fill="none" stroke="#888a85" stroke-width="3.600"/></svg></div>
      </div>
      <div class="tabs">
        <div class="tab"><svg class="ic"><use href="#align"/></svg><span>Align and Distribute <em>(Shift+Ctrl+A)</em></span><svg class="cv"><use href="#chev"/></svg></div>
        <div class="tab"><svg class="ic"><use href="#export"/></svg><span>Export PNG Image <em>(Shift+Ctrl+E)</em></span><svg class="cv"><use href="#chev"/></svg></div>
        <div class="tab"><svg class="ic"><use href="#fill"/></svg><span>Fill and Stroke <em>(Shift+Ctrl+F)</em></span><svg class="cv"><use href="#chev"/></svg></div>
        <div class="tab on"><svg class="ic lay"><use href="#layers"/></svg><span>Layers <em>(Shift+Ctrl+L)</em></span><svg class="cv"><use href="#chev"/></svg></div>
        <div class="tab"><svg class="ic"><use href="#props"/></svg><span>Object Properties <em>(Shift+Ctrl+O)</em></span><svg class="cv"><use href="#chev"/></svg></div>
        <div class="tab"><svg class="ic" viewBox="0 0 16 16"><text class="glyph-t" x="-.3" y="15.500" font-size="23" textLength="16.600" lengthAdjust="spacingAndGlyphs">T</text></svg><span>Text and Font <em>(Shift+Ctrl+T)</em></span><svg class="cv"><use href="#chev"/></svg></div>
        <div class="tab"><svg class="ic"><use href="#arrange"/></svg><span>Arrange</span><svg class="cv"><use href="#chev"/></svg></div>
        <div class="tab"><svg class="ic"><use href="#transform"/></svg><span>Transform <em>(Shift+Ctrl+M)</em></span><svg class="cv"><use href="#chev"/></svg></div>
        <div class="tab"><svg class="ic"><use href="#history"/></svg><span>Undo History <em>(Shift+Ctrl+H)</em></span><svg class="cv"><use href="#chev"/></svg></div>
        <div class="tab"><svg class="ic"><use href="#xml"/></svg><span>XML Editor <em>(Shift+Ctrl+X)</em></span><svg class="cv"><use href="#chev"/></svg></div>
      </div>
      <div class="dots"><i></i><i></i><i></i><i></i><i></i></div>
    </section>

    <aside class="commands">
      <div class="cell"><svg><use href="#new"/></svg></div>
      <div class="cell"><svg><use href="#open"/></svg></div>
      <div class="cell"><svg><use href="#save"/></svg></div>
      <div class="cell"><svg><use href="#print"/></svg></div>
      <i class="hsep"></i>
      <div class="cell"><svg><use href="#import"/></svg></div>
      <div class="cell"><svg><use href="#export"/></svg></div>
      <i class="hsep"></i>
      <div class="cell"><svg><use href="#undo"/></svg></div>
      <div class="cell stipple"><svg><use href="#redo"/></svg></div>
      <i class="hsep"></i>
      <div class="cell"><svg><use href="#copy"/></svg></div>
      <div class="cell"><svg><use href="#cut"/></svg></div>
      <div class="cell"><svg><use href="#paste"/></svg></div>
      <i class="hsep"></i>
      <div class="cell"><svg><use href="#zsel"/></svg></div>
      <div class="cell"><svg><use href="#zdraw"/></svg></div>
      <div class="cell"><svg><use href="#zpage"/></svg></div>
      <i class="hsep"></i>
      <div class="cell"><svg><use href="#dup"/></svg></div>
      <div class="cell"><svg><use href="#clone"/></svg></div>
      <div class="cell"><svg><use href="#unclone"/></svg></div>
      <i class="hsep"></i>
      <div class="cell"><svg><use href="#group"/></svg></div>
      <div class="cell"><svg><use href="#ungroup"/></svg></div>
      <i class="hsep"></i>
      <div class="cell"><svg><use href="#fill"/></svg></div>
      <div class="cell"><svg viewBox="0 0 16 16"><text class="glyph-t" x="-.3" y="15.500" font-size="23" textLength="16.600" lengthAdjust="spacingAndGlyphs">T</text></svg></div>
      <div class="cell"><svg class="lay"><use href="#layers"/></svg></div>
      <div class="cell"><svg><use href="#xml"/></svg></div>
      <div class="more"><svg viewBox="0 0 12 18"><path d="M2 2l8 7-8 7" fill="none" stroke="#8a8c87" stroke-width="3.200"/></svg></div>
    </aside>

    <aside class="snaps">
      <div class="cell"><div class="btn on"><svg><use href="#snap"/></svg></div></div>
      <i class="hsep"></i>
      <div class="cell"><svg><use href="#snap"/></svg></div>
      <div class="cell"><svg><use href="#sbbox"/></svg></div>
      <div class="cell"><svg><use href="#scorner"/></svg></div>
      <div class="cell"><svg><use href="#sedge"/></svg></div>
      <div class="cell"><svg><use href="#scenter"/></svg></div>
      <i class="hsep"></i>
      <div class="cell"><div class="btn on"><svg><use href="#snap"/></svg></div></div>
      <div class="cell"><svg><use href="#spath"/></svg></div>
      <div class="cell"><svg><use href="#sint"/></svg></div>
      <div class="cell"><svg><use href="#scusp"/></svg></div>
      <div class="cell"><svg><use href="#ssmooth"/></svg></div>
      <div class="cell"><svg><use href="#smid"/></svg></div>
      <i class="hsep"></i>
      <div class="cell"><div class="btn on"><svg><use href="#snap"/></svg></div></div>
      <div class="cell"><svg><use href="#sobj"/></svg></div>
      <div class="cell"><svg><use href="#srot"/></svg></div>
      <div class="cell"><svg viewBox="0 0 16 16"><path d="M0 14h16" stroke="#2d8c3c"/><text class="glyph-a" x="3" y="13.500" font-size="16.500" textLength="13.500" lengthAdjust="spacingAndGlyphs">A</text><path d="M0 13.500l3-2.700 3 2.700-3 2.700z" fill="#2d8c3c"/><circle cx="3" cy="13.500" r=".9" fill="#bcf"/></svg></div>
      <i class="hsep"></i>
      <div class="cell"><svg><use href="#spage"/></svg></div>
      <div class="cell"><div class="btn on"><svg><use href="#sgrid"/></svg></div></div>
      <div class="cell"><div class="btn on"><svg><use href="#sguide"/></svg></div></div>
    </aside>
  </main>

  <div class="palette">
    <div class="swatches" id="swatches"><svg class="none" viewBox="0 0 26 26"><path d="M1 0l24 26M25 0 1 26" stroke="#7a0c0c" stroke-width="2"/></svg></div>
    <svg class="palmenu" viewBox="0 0 12 18"><path d="M10 1 3 9l7 8" fill="none" stroke="#8a8c87" stroke-width="3"/></svg>
  </div>
  <div class="palscroll"><i></i></div>

  <footer class="status">
    <div class="fs"><span>Fill:</span><span>N/A</span><span>Stroke:</span><span>N/A</span></div>
    <label class="o">O:</label>
    <div class="entry off small"><span>0</span><svg><use href="#spin"/></svg></div>
    <i class="div"></i>
    <svg class="eye"><use href="#eye"/></svg>
    <svg class="lk"><use href="#lock"/></svg>
    <div class="combo cur"><span>•Layer 1</span><svg><use href="#chev"/></svg></div>
    <p class="msg">No objects selected. Click, Shift+click, Alt+scroll mouse on top of objects, or drag around objects to select.</p>
    <i class="div"></i>
    <div class="xy"><span>X:</span><span>327.40</span><span>Y:</span><span>28.60</span></div>
    <label class="z">Z:</label>
    <div class="entry zoom"><span>133%</span><svg><use href="#spin"/></svg></div>
    <svg class="grip" viewBox="0 0 28 28"><path d="M0 0h28v28H0z" fill="#fff"/><path d="M6 27 27 4M13 27 27 12M20 27l7-8" stroke="#999" stroke-width="1.600"/></svg>
  </footer>
</div>
<script src="app.js"></script>
</body>
</html>
```
FILE: styles.css
```css
* { box-sizing: border-box; }
body {
  margin: 0;
  width: 2388px;
  height: 1874px;
  padding: 8px 14px 20px;
  background: #fff;
  overflow: hidden;
  font: 24px/1 "Noto Sans", sans-serif;
  color: #2e3436;
}
svg { display: block; flex: none; }
.sprite { position: absolute; width: 0; height: 0; }
i { display: block; flex: none; }
.glyph-a { font-family: "DejaVu Sans", sans-serif; font-weight: bold; fill: #1b1b1b; }
.glyph-t { font-family: "Liberation Serif", serif; font-weight: bold; fill: #000; }

.window {
  width: 2360px;
  height: 1846px;
  display: flex;
  flex-direction: column;
  background: #ececec;
  border-radius: 10px 10px 3px 3px;
  box-shadow: 0 0 2px rgba(0,0,0,.65), 0 8px 14px rgba(0,0,0,.6);
}

.titlebar {
  height: 44px;
  display: grid;
  grid-template-columns: 1fr auto 1fr;
  align-items: center;
  border-radius: 10px 10px 0 0;
  border-top: 2px solid #f7f7f7;
  background: linear-gradient(#ebebeb, #d2d2d2);
}
.lights { display: flex; gap: 16px; padding-left: 16px; }
.lights i { width: 24px; height: 24px; border-radius: 50%; border: 2px solid #cbcbcb; background: #dcdcdc; }
.title { display: flex; align-items: center; gap: 14px; color: #4a4c4d; padding-left: 3px; letter-spacing: .8px; }
.xdoc { width: 28px; height: 30px; }

.menubar { height: 42px; display: flex; align-items: center; letter-spacing: .15px; }
.menubar span { padding: 0 14px; }

.toolbar { height: 72px; display: flex; align-items: center; padding-left: 8px; font-size: 20px; }
.cell { width: 56px; height: 56px; display: flex; align-items: center; justify-content: center; flex: none; }
.cell svg { width: 32px; height: 32px; }
.cell svg.aff { width: 26px; height: 26px; }
.stipple svg {
  -webkit-mask: conic-gradient(#000 25%, rgba(0,0,0,.25) 0 50%, #000 0 75%, rgba(0,0,0,.25) 0) 0 0/4px 4px;
  mask: conic-gradient(#000 25%, rgba(0,0,0,.25) 0 50%, #000 0 75%, rgba(0,0,0,.25) 0) 0 0/4px 4px;
}
.vsep { width: 2px; height: 36px; margin: 0 11px; background: #b8bab7; }
.vsep.last { margin: 0 11px 0 13px; }
.btn { width: 52px; height: 54px; display: flex; align-items: center; justify-content: center; }
.on {
  background: linear-gradient(#a4aaa5, #bfc2bf 45%, #dedede);
  border: 2px solid #b9bbb8;
  border-radius: 7px;
}
.lbl { color: #b2b4b1; flex: none; }
.lbl.x { margin-left: 15px; width: 31px; }
.lbl.y { margin-left: 16px; width: 32px; }
.lbl.w { margin-left: 15px; width: 37px; }
.lbl.h { margin-left: 34px; width: 31px; }
.tb-lock { width: 22px; height: 24px; margin-left: 17px; }

.entry {
  width: 122px;
  height: 46px;
  flex: none;
  display: flex;
  align-items: center;
  justify-content: space-between;
  padding-left: 10px;
  background: #fff;
  border: 2px solid #b6b8b5;
  border-radius: 7px;
  color: #2e3436;
  font-size: 20px;
}
.entry span { letter-spacing: .2px; }
.entry svg { width: 26px; height: 42px; border-left: 2px solid #e4e4e2; color: #8a8c87; }
.entry.off { background: #f4f4f2; color: #b5b7b4; }
.entry.off svg { color: #b9bbb7; }
.combo {
  display: flex;
  align-items: center;
  justify-content: space-between;
  background: linear-gradient(#fcfcfc, #ececec 50%, #d9d9d9);
  border: 2px solid #b6b8b5;
  border-radius: 7px;
}
.combo svg { width: 18px; height: 12px; color: #8a8c87; }
.units { width: 85px; height: 46px; margin-left: 2px; padding: 0 11px 0 8px; }

.main { height: 1578px; display: flex; }
.toolbox { width: 84px; padding: 8px 0 0 10px; }
.tool { width: 60px; height: 62px; margin-bottom: 2px; display: flex; align-items: center; justify-content: center; border-radius: 7px; }
.tool svg { width: 48px; height: 48px; }

.editor {
  display: grid;
  grid-template-columns: 26px 1110px 38px;
  grid-template-rows: 28px 1510px 40px;
}
.hruler { grid-column: 1 / 3; width: 1138px; height: 28px; }
.vruler { grid-column: 1; grid-row: 2; width: 26px; height: 1510px; overflow: hidden; }
.hruler path, .vruler path { stroke: #2e3436; stroke-width: 2; fill: none; }
.hruler text, .vruler text { font: 14px "DejaVu Sans", sans-serif; fill: #4a4f50; }
.vruler text { text-anchor: middle; }
.zoomfit {
  width: 36px; height: 38px; margin-left: 2px;
  display: flex; align-items: center; justify-content: center;
  background: linear-gradient(#a4aaa5, #dcdcdc);
  border: 2px solid #b9bbb8; border-radius: 7px;
  z-index: 1;
}
.zoomfit svg { width: 24px; height: 28px; }
.canvas { grid-column: 2; grid-row: 2; width: 1110px; height: 1510px; background: #fff; }
.labels { font: 28.300px "DejaVu Sans", sans-serif; }
.labels .big { font-size: 35px; }
.vscroll { width: 26px; margin: 12px 0 0 6px; padding: 513px 6px 0; background: #d6d6d6; }
.vscroll i { width: 14px; height: 480px; border-radius: 7px; background: #9b9c9d; }
.hscroll { grid-column: 2; height: 26px; margin-top: 6px; padding: 6px 0 0 308px; background: #d6d6d6; }
.hscroll i { width: 498px; height: 14px; border-radius: 7px; background: #9b9c9d; }
.cms { padding: 8px 0 0 8px; }
.cms svg { width: 22px; height: 24px; }

.splitter { width: 13px; display: flex; flex-direction: column; gap: 7px; padding: 764px 0 0 4px; }
.splitter i, .dots i { width: 4px; height: 4px; background: #c6c6c2; }

.dock {
  width: 943px;
  display: flex;
  flex-direction: column;
  border-left: 2px solid #a8aaa8;
  border-top: 2px solid #a8aaa8;
  border-right: 2px solid #fff;
  border-bottom: 2px solid #fff;
}
.dock em { font-style: normal; letter-spacing: 1.150px; }
.dock-title {
  height: 50px; margin: 4px 4px 0 4px; padding-bottom: 2px;
  display: flex; align-items: center;
  border: 2px solid #b6b8b5;
}
.lay, .cell svg.lay { width: 32px; height: 24px; }
.dock-title .lay { margin-left: -1px; }
.dock-title span { margin-left: 0; flex: 1; letter-spacing: .15px; }
.mini { width: 22px; height: 22px; border: 2px solid #8a8c87; border-radius: 4px; }
.mini + .mini { margin: 0 12px 0 26px; }
.mini svg { width: 18px; height: 18px; }
.dock-body { height: 836px; margin: 0 4px; padding: 6px; border: 2px solid #b6b8b5; border-top: 0; }
.layer-list { height: 640px; border: 2px solid #b0b3b0; border-width: 2px 1px; background: #fff; }
.layer { height: 50px; display: flex; align-items: center; padding: 0 0 1px 12px; }
.layer span { margin-left: 53px; }
.layer.sel { background: #3a80cc; color: #fff; }
.eye { width: 24px; height: 20px; margin-bottom: 2px; }
.lk { width: 20px; height: 22px; margin-left: 27px; }
.layer-actions { height: 58px; margin: 0 1px 0 -2px; display: flex; align-items: center; padding-bottom: 2px; }
.cell svg.s28 { width: 28px; height: 28px; }
.grow { flex: 1; }
.blend { height: 50px; margin: 3px 1px 0 -1px; display: flex; align-items: center; }
.blend label { width: 174px; letter-spacing: .3px; }
.blend .combo { flex: 1; height: 50px; padding: 0 13px 0 8px; }
.opacity {
  height: 54px; margin: 11px 0 0 -1px; padding: 6px 0 6px 6px; display: flex; align-items: center; justify-content: space-between;
  border: 2px solid #b6b8b5; border-radius: 7px; background: #fff; overflow: hidden;
}
.bar {
  width: 868px; height: 40px; padding: 0 3px 0 8px; display: flex; align-items: center; justify-content: space-between;
  background: #4a90d9; color: #fff; letter-spacing: .6px;
  border-top: 2px solid #7db5f0; border-right: 2px solid #000; border-bottom: 2px solid #000;
}
.ospin { width: 30px; height: 50px; }
.tabs { padding: 5px 4px 0 8px; display: flex; flex-direction: column; gap: 6px; }
.tab {
  height: 42px; display: flex; align-items: center; padding-left: 1px;
  background: linear-gradient(#fafafa, #ececec 50%, #d9d9d9);
  border: 2px solid #b6b8b5; border-radius: 7px;
  box-shadow: 0 2px 0 #f6f6f6;
}
.tab .ic { width: 32px; height: 32px; }
.tab .ic.lay { height: 24px; }
.tab span { margin-left: 5px; flex: 1; letter-spacing: .35px; }
.tab .cv { width: 18px; height: 12px; margin-right: 10px; color: #8a8c87; transform: scaleY(-1); }
.tab.on { background: linear-gradient(#a2a8a3, #aeb2af 30%, #dedede); }
.dots { display: flex; gap: 7px; justify-content: center; margin-top: 12px; }

.commands { width: 76px; padding: 8px 0 0 10px; }
.hsep { width: 36px; height: 2px; margin: 11px 10px; background: #b8bab7; }
.more { width: 56px; padding: 51px 0 0 21px; }
.more svg { width: 12px; height: 18px; }
.snaps { padding: 7px 0 0 6px; }

.palette { height: 30px; display: flex; }
.swatches { width: 2336px; padding-left: 2px; display: flex; overflow: hidden; border-top: 2px solid #a8aaa8; background: #fff; }
.swatches > * { width: 26px; height: 26px; }
.palmenu { width: 12px; height: 18px; margin: 4px 0 0 6px; }
.palscroll { width: 2336px; height: 26px; margin: 2px 0; padding: 6px; background: #d6d6d6; }
.palscroll i { width: 472px; height: 14px; border-radius: 7px; background: #9b9c9d; }

.status { height: 50px; display: flex; align-items: center; }
.fs { width: 255px; padding-left: 4px; display: grid; grid-template-columns: 137px 1fr; row-gap: 4px; font-size: 20px; }
.fs span, .xy span { height: 20px; line-height: 20px; }
.o { width: 27px; font-size: 20px; }
.entry.small { width: 94px; padding-left: 9px; }
.div { width: 2px; height: 48px; background: #b8bab7; }
.status > .entry + .div { margin-left: 4px; }
.status .eye { margin-left: 7px; }
.status .lk { margin-left: 15px; }
.cur { width: 200px; height: 46px; margin-left: 9px; padding: 0 13px 0 10px; font-size: 20.500px; font-weight: 600; }
.msg { margin: 0 0 0 12px; width: 1388px; white-space: nowrap; letter-spacing: .75px; }
.xy { width: 129px; padding-left: 4px; display: grid; grid-template-columns: 20px 90px; row-gap: 4px; font-size: 20px; }
.xy span:nth-child(even) { font-family: "DejaVu Sans Mono", monospace; text-align: right; }
.z { width: 26px; font-size: 20px; }
.entry.zoom { width: 112px; padding-left: 13px; }
.grip { width: 28px; height: 28px; margin: 20px 0 0 8px; }
```
FILE: app.js
```js
const NS = 'http://www.w3.org/2000/svg';
const STEP = 2.657; // pixels per document unit at the current zoom

function add(parent, tag, attrs, text) {
  const el = document.createElementNS(NS, tag);
  for (const k in attrs) el.setAttribute(k, attrs[k]);
  if (text !== undefined) el.textContent = text;
  parent.appendChild(el);
}

function horizontalRuler(svg) {
  let d = 'M126 193H1232';
  for (let u = -70; u <= 345; u += 5) {
    const x = Math.round(313.5 + u * STEP);
    const top = u % 50 === 0 ? 170 : u % 10 === 0 ? 182 : 187;
    d += `M${x} ${top}V193`;
    if (u % 50 === 0) add(svg, 'text', { x: x + 3, y: 186 }, String(u).replace('-', '\u2212'));
  }
  add(svg, 'path', { d });
  add(svg, 'path', { d: 'M1174 184h14l-7 8z', style: 'fill:#2e3436;stroke-width:1' });
}

function verticalRuler(svg) {
  let d = 'M123 196V1702';
  for (let u = -15; u <= 550; u += 5) {
    const y = Math.round(1655 - u * STEP);
    const left = u % 50 === 0 ? 100 : u % 10 === 0 ? 112 : 116;
    if (y > 196) d += `M${left} ${y}H123`;
    if (u % 50 === 0) {
      [...String(u)].forEach((c, i) => add(svg, 'text', { x: 104, y: y + 15 + i * 16 }, c));
    }
  }
  add(svg, 'path', { d });
  add(svg, 'path', { d: 'M115 1569v14l8-7z', style: 'fill:#2e3436;stroke-width:1' });
}

const colors = ('000 1a1a1a 333 4d4d4d 666 808080 999 b3b3b3 ccc e6e6e6 ececec f2f2f2 f9f9f9 fff ' +
  '800000 f00 808000 ff0 008000 0f0 008080 0ff 000080 00f 800080 f0f ' +
  '2b0000 550000 800000 a00 d40000 f00 ff2a2a f55 ff8080 faa ffd5d5 ' +
  '280b0b 501616 782121 a02c2c c83737 d35f5f de8787 e9afaf f4d7d7 ' +
  '241c1c 483737 6c5353 916f6f ac9393 c8b7b7 e3dbdb ' +
  '2b1100 520 803300 a40 d45500 f60 ff7f2a f95 ffb380 fca ffe6d5 ' +
  '28170b 502d16 784421 a05a2c c87137 d38d5f deaa87 e9c6af f4e3d7 ' +
  '241f1c 483e37 6c5d53 917c6f ac9d93 c8beb7 e3dedb ' +
  '2b2200 540 806600 a80 d4aa00 fc0 ffd42a fd5 ffe680').split(' ');

horizontalRuler(document.getElementById('hruler'));
verticalRuler(document.getElementById('vruler'));
const row = document.getElementById('swatches');
for (const c of colors) {
  const s = document.createElement('i');
  s.style.background = '#' + c;
  row.appendChild(s);
}
```
